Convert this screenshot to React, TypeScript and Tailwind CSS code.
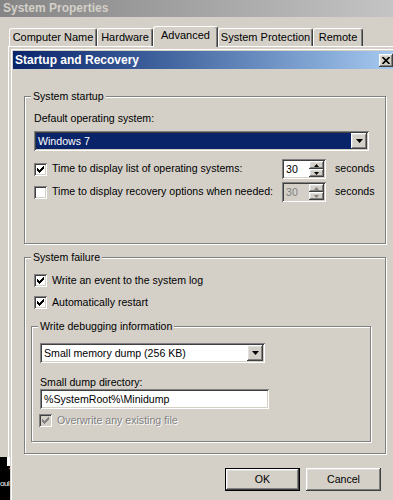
import React from 'react';

const raised =
  'bg-[#d4d0c8] shadow-[inset_-1px_-1px_0_#404040,inset_1px_1px_0_#ffffff,inset_-2px_-2px_0_#808080,inset_2px_2px_0_#dfdfdf]';
const sunken =
  'shadow-[inset_1px_1px_0_#808080,inset_-1px_-1px_0_#ffffff,inset_2px_2px_0_#404040,inset_-2px_-2px_0_#d4d0c8]';
const greyText = 'text-[#808080] [text-shadow:1px_1px_0_#ffffff]';

const Check: React.FC<{ checked?: boolean; disabled?: boolean }> = ({ checked, disabled }) => (
  <div className={`w-[13px] h-[13px] shrink-0 relative ${sunken} ${disabled ? 'bg-[#d4d0c8]' : 'bg-white'}`}>
    {checked && (
      <svg className="absolute left-[3px] top-[3px]" width="7" height="7" viewBox="0 0 7 7" shapeRendering="crispEdges">
        <path d="M0 2 L2 4 L6 0 L7 0 L7 3 L2 7 L0 5 Z" fill={disabled ? '#808080' : '#000000'} />
      </svg>
    )}
  </div>
);

const Arrow: React.FC<{ up?: boolean; small?: boolean; grey?: boolean }> = ({ up, small, grey }) => {
  const w = small ? 5 : 7;
  const h = small ? 3 : 4;
  const d = up ? `M0 ${h} H${w} L${w / 2} 0 Z` : `M0 0 H${w} L${w / 2} ${h} Z`;
  return (
    <svg width={w} height={h} viewBox={`0 0 ${w} ${h}`}>
      <path d={d} fill={grey ? '#808080' : '#000000'} />
    </svg>
  );
};

const Spin: React.FC<{ disabled?: boolean }> = ({ disabled }) => (
  <div className={`w-[44px] h-[20px] shrink-0 flex p-[2px] ${sunken} ${disabled ? 'bg-[#d4d0c8]' : 'bg-white'}`}>
    <div className={`flex-1 pl-[2px] leading-[16px] ${disabled ? 'text-[#808080]' : ''}`}>30</div>
    <div className="w-[15px] flex flex-col">
      <div className={`h-[8px] flex items-center justify-center ${raised}`}>
        <Arrow up small grey={disabled} />
      </div>
      <div className={`h-[8px] flex items-center justify-center ${raised}`}>
        <Arrow small grey={disabled} />
      </div>
    </div>
  </div>
);

const Select: React.FC<{ text: string; width: string; highlight?: boolean }> = ({ text, width, highlight }) => (
  <div className={`${width} h-[20px] flex p-[2px] bg-white ${sunken}`}>
    <div className={`flex-1 pl-[2px] leading-[16px] ${highlight ? 'bg-[#0a246a] text-white' : ''}`}>{text}</div>
    <div className={`w-[16px] h-[16px] flex items-center justify-center ${raised}`}>
      <Arrow />
    </div>
  </div>
);

const Group: React.FC<{ label: string; className: string; children: React.ReactNode }> = ({ label, className, children }) => (
  <div className={`relative border border-[#808080] shadow-[inset_1px_1px_0_#ffffff,1px_1px_0_#ffffff] ${className}`}>
    <span className="absolute left-[6px] -top-[7px] px-[2px] bg-[#d4d0c8] leading-[13px]">{label}</span>
    {children}
  </div>
);

const tabs = [
  { name: 'Computer Name', w: 'w-[88px]' },
  { name: 'Hardware', w: 'w-[56px]' },
  { name: 'Advanced', w: 'w-[65px]', active: true },
  { name: 'System Protection', w: 'w-[95px]' },
  { name: 'Remote', w: 'w-[50px]' },
];

const Button: React.FC<{ label: string; isDefault?: boolean }> = ({ label, isDefault }) => (
  <div className={`w-[75px] h-[23px] ${isDefault ? 'border border-black' : ''}`}>
    <div className={`w-full h-full flex items-center justify-center ${raised}`}>{label}</div>
  </div>
);

export default function App() {
  return (
    <div className="relative w-[393px] h-[500px] overflow-hidden bg-[#d4d0c8] font-['Liberation_Sans',Arial,sans-serif] text-[10.6px] text-black">
      {/* parent window (inactive) */}
      <div className="h-[17px] bg-linear-to-r from-[#858585] to-[#c4c4c4] pl-[3px] text-[12px] font-bold leading-[17px] text-[#d4d0c8]">
        System Properties
      </div>
      <div className="mt-[11px] pl-[9px] h-[18px] flex items-end text-[11px]">
        {tabs.map((t) => (
          <div
            key={t.name}
            className={`${t.w} flex items-center justify-center rounded-t-[3px] border-t border-l border-white border-r border-r-[#404040] shadow-[inset_-1px_0_0_#808080] bg-[#d4d0c8] ${
              t.active ? 'h-[21px] -mb-[1px] relative z-10 pb-[3px]' : 'h-[18px]'
            }`}
          >
            {t.name}
          </div>
        ))}
      </div>
      <div className="ml-[8px] h-[460px] border-t border-l border-white" />

      {/* window behind, peeking out */}
      <div className="absolute left-0 top-[457px] w-[10px] h-[43px] bg-black overflow-hidden">
        <div className="absolute right-0 top-0 w-[3px] h-[9px] bg-white" />
        <div className="absolute right-0 top-[11px] w-[1px] h-[1px] bg-[#e04040]" />
        <div className="absolute left-0 top-[21px] text-[8px] tracking-[-0.5px] text-white leading-[11px]">oul</div>
      </div>

      {/* Startup and Recovery dialog */}
      <div className="absolute left-[11px] top-[49px] w-[385px] h-[470px] border-t border-l border-white p-[1px] bg-[#d4d0c8]">
        <div className="h-[18px] flex items-center bg-linear-to-r from-[#0a246a] to-[#a6caf0] pl-[2px]">
          <span className="flex-1 text-[12px] font-bold text-white">Startup and Recovery</span>
          <div className={`w-[14px] h-[13px] mr-[2px] flex items-center justify-center ${raised}`}>
            <svg width="8" height="7" viewBox="0 0 8 7">
              <path d="M0.5 0 L7.5 7 M7.5 0 L0.5 7" stroke="#000" strokeWidth="1.6" />
            </svg>
          </div>
        </div>

        <div className="pl-[11px] pt-[27px]">
          <Group label="System startup" className="w-[362px] h-[148px]">
            <div className="pl-[9px] pt-[15px]">
              <div className="leading-[13px]">Default operating system:</div>
              <div className="mt-[6px]">
                <Select text="Windows 7" width="w-[335px]" highlight />
              </div>
              <div className="mt-[8px] flex flex-col gap-[3px]">
                <div className="flex items-center h-[20px]">
                  <Check checked />
                  <span className="ml-[5px] w-[230px] whitespace-nowrap">Time to display list of operating systems:</span>
                  <Spin />
                  <span className="ml-[9px]">seconds</span>
                </div>
                <div className="flex items-center h-[20px]">
                  <Check />
                  <span className="ml-[5px] w-[230px] whitespace-nowrap">Time to display recovery options when needed:</span>
                  <Spin disabled />
                  <span className="ml-[9px]">seconds</span>
                </div>
              </div>
            </div>
          </Group>

          <Group label="System failure" className="mt-[13px] w-[362px] h-[197px]">
            <div className="pl-[9px] pt-[16px]">
              <div className="flex items-center h-[13px]">
                <Check checked />
                <span className="ml-[5px]">Write an event to the system log</span>
              </div>
              <div className="mt-[9px] flex items-center h-[13px]">
                <Check checked />
                <span className="ml-[5px]">Automatically restart</span>
              </div>
              <Group label="Write debugging information" className="mt-[17px] -ml-[3px] w-[340px] h-[116px]">
                <div className="pl-[8px] pt-[16px]">
                  <Select text="Small memory dump (256 KB)" width="w-[225px]" />
                  <div className="mt-[13px] leading-[13px]">Small dump directory:</div>
                  <div className={`w-[229px] h-[20px] bg-white pl-[4px] leading-[20px] ${sunken}`}>
                    %SystemRoot%\Minidump
                  </div>
                  <div className="mt-[5px] -ml-[1px] flex items-center h-[13px]">
                    <Check checked disabled />
                    <span className={`ml-[5px] ${greyText}`}>Overwrite any existing file</span>
                  </div>
                </div>
              </Group>
            </div>
          </Group>

          <div className="mt-[14px] w-[362px] pr-[5px] flex justify-end gap-[6px]">
            <Button label="OK" isDefault />
            <Button label="Cancel" />
          </div>
        </div>
      </div>
    </div>
  );
}
